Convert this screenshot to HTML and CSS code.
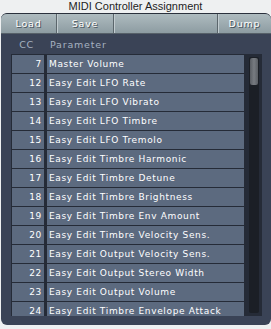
FILE: index.html
```html
<!DOCTYPE html>
<html lang="en">

<head>
    <meta charset="UTF-8">
    <title>MIDI Controller Assignment</title>
    <link rel="stylesheet" href="styles.css">
</head>

<body>
    <div class="title">MIDI Controller Assignment</div>

    <div class="panel">
        <div class="toolbar">
            <button class="tool load">Load</button>
            <button class="tool save">Save</button>
            <button class="tool blank"></button>
            <button class="tool dump">Dump</button>
        </div>

        <div class="head">
            <span class="head-cc">CC</span>
            <span class="head-param">Parameter</span>
        </div>

        <div class="list">
            <div class="rows">
                <div class="row"><span class="cc">7</span><span class="param">Master Volume</span></div>
                <div class="row"><span class="cc">12</span><span class="param">Easy Edit LFO Rate</span></div>
                <div class="row"><span class="cc">13</span><span class="param">Easy Edit LFO Vibrato</span></div>
                <div class="row"><span class="cc">14</span><span class="param">Easy Edit LFO Timbre</span></div>
                <div class="row"><span class="cc">15</span><span class="param">Easy Edit LFO Tremolo</span></div>
                <div class="row"><span class="cc">16</span><span class="param">Easy Edit Timbre Harmonic</span></div>
                <div class="row"><span class="cc">17</span><span class="param">Easy Edit Timbre Detune</span></div>
                <div class="row"><span class="cc">18</span><span class="param">Easy Edit Timbre Brightness</span></div>
                <div class="row"><span class="cc">19</span><span class="param">Easy Edit Timbre Env Amount</span></div>
                <div class="row"><span class="cc">20</span><span class="param">Easy Edit Timbre Velocity Sens.</span></div>
                <div class="row"><span class="cc">21</span><span class="param">Easy Edit Output Velocity Sens.</span></div>
                <div class="row"><span class="cc">22</span><span class="param">Easy Edit Output Stereo Width</span></div>
                <div class="row"><span class="cc">23</span><span class="param">Easy Edit Output Volume</span></div>
                <div class="row"><span class="cc">24</span><span class="param">Easy Edit Timbre Envelope Attack</span></div>
            </div>
            <div class="scroll">
                <div class="thumb"></div>
            </div>
        </div>
    </div>
</body>

</html>
```

FILE: styles.css
```css
body {
    margin: 0;
    padding: 0;
    background: #eef0f1;
    font-family: "DejaVu Sans", sans-serif;
}

.title {
    height: 13px;
    line-height: 13px;
    text-align: center;
    font-family: "Liberation Sans", Arial, sans-serif;
    font-size: 11px;
    color: #1e1e1e;
}

.panel {
    margin: 0 0 0 1px;
    height: 312px;
    border-radius: 6px;
    border-top: 1px solid #2a303c;
    box-sizing: border-box;
    background-color: #3a4356;
    background-image: radial-gradient(rgba(255, 255, 255, 0.07) 0.6px, transparent 0.7px);
    background-size: 2px 2px;
    overflow: hidden;
}

.toolbar {
    display: flex;
    height: 20px;
    background: linear-gradient(#aebbbf, #8d9ca2);
    border-bottom: 1px solid #566068;
    box-sizing: border-box;
}

.tool {
    margin: 0;
    padding: 0;
    border: none;
    border-right: 1px solid #5b666c;
    box-shadow: inset 1px 0 0 #c2ccd0;
    background: transparent;
    color: #fff;
    font-family: "DejaVu Sans", sans-serif;
    font-size: 9.5px;
    letter-spacing: 0.8px;
    text-align: center;
    text-shadow: 1px 1px 0 #46525a;
    height: 19px;
}

.load {
    width: 56px;
    box-shadow: none;
}

.save {
    width: 57px;
}

.blank {
    width: 104px;
}

.dump {
    flex: 1;
    border-right: none;
}

.head {
    display: flex;
    height: 20px;
    align-items: center;
    color: #a6b2c1;
    font-size: 9.5px;
    letter-spacing: 0.8px;
}

.head-cc {
    width: 33px;
    text-align: right;
}

.head-param {
    margin-left: 16px;
}

.list {
    display: flex;
    margin-left: 10px;
    width: 251px;
    height: 262px;
    background: #252b37;
    overflow: hidden;
}

.rows {
    padding: 1px 0 0 1px;
    width: 233px;
}

.row {
    display: grid;
    grid-template-columns: 32px 197px;
    column-gap: 3px;
    height: 18px;
    margin-bottom: 1px;
    font-size: 9px;
    letter-spacing: 0.65px;
    color: #fff;
}

.cc,
.param {
    background: #5c6a7f;
    line-height: 18px;
    white-space: nowrap;
    overflow: hidden;
}

.cc {
    text-align: right;
    padding-right: 2px;
}

.param {
    padding-left: 2px;
}

.scroll {
    margin: 3px 0 3px 4px;
    width: 10px;
    background: #1b1f26;
    border-radius: 2px;
}

.thumb {
    margin: 1px 1px 0 1px;
    height: 27px;
    background: linear-gradient(90deg, #595d63, #777b81, #5a5e64);
    border-radius: 2px;
}
```
